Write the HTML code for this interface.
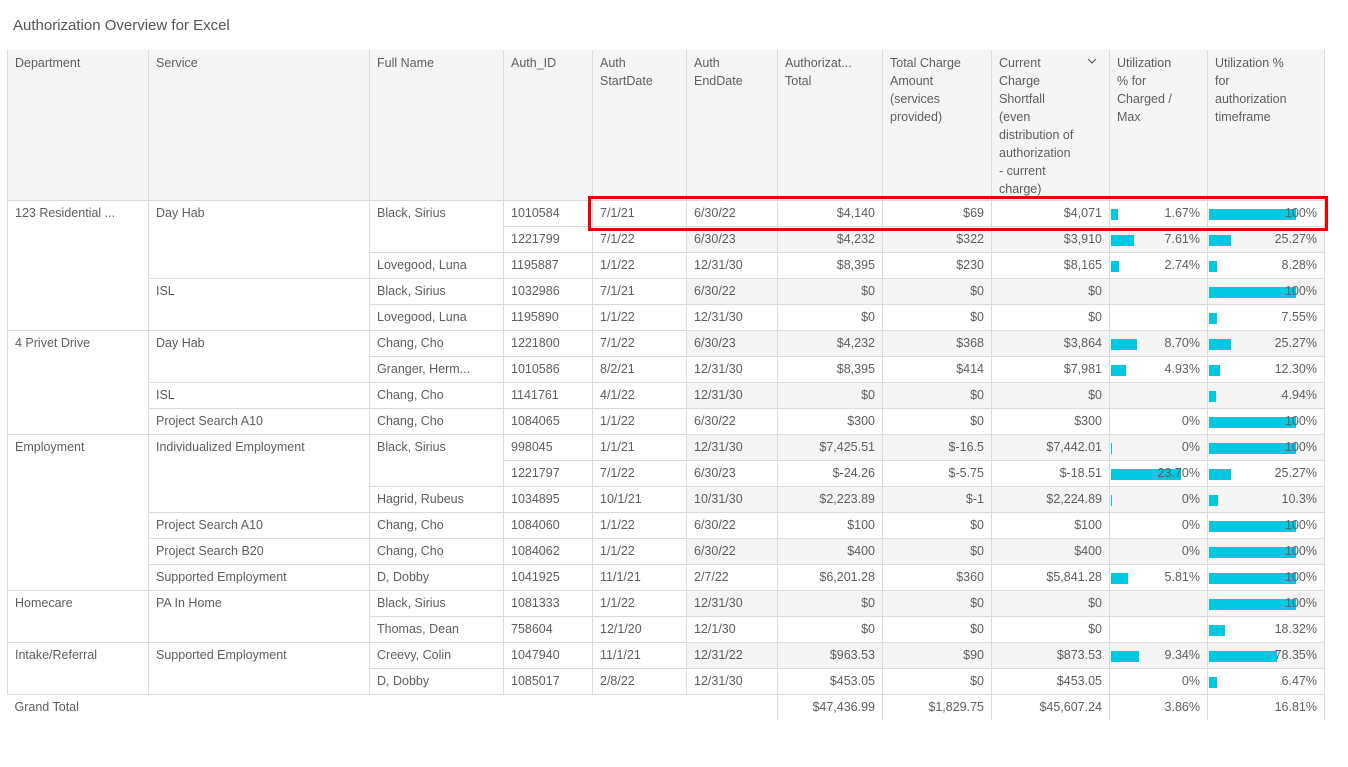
<!DOCTYPE html>
<html><head><meta charset="utf-8"><style>
body{margin:0;width:1348px;height:767px;background:#fff;font-family:"Liberation Sans",sans-serif;color:#605e5c;position:relative;overflow:hidden}
.title{position:absolute;left:13px;top:17px;font-size:15px;color:#555}
table{position:absolute;left:7px;top:50px;border-collapse:collapse;table-layout:fixed;font-size:12.5px}
td,th{border:1px solid #dcdcdc;padding:0 7px;height:25px;white-space:nowrap;overflow:hidden;vertical-align:top;line-height:25px;font-weight:normal}
th{background:#f5f5f5;height:146px;text-align:left;white-space:nowrap;line-height:18px;padding-top:4px;border-top:none;color:#605e5c}
.r{text-align:right}
tr.g td.b{background:#f5f5f5}
.cell{position:relative}
.bar{position:absolute;left:1px;top:8px;height:11px;background:#00c8e1}
.cell span{position:relative}
.gt td{border-left:none;border-right:none;border-bottom:none}
.gt td.v{border-left:1px solid #dcdcdc;border-right:1px solid #dcdcdc}
.box{position:absolute;left:588px;top:196px;width:734px;height:29px;border:3px solid #e00}
</style></head><body>
<div class="title">Authorization Overview for Excel</div>
<table>
<colgroup><col style="width:141px"><col style="width:221px"><col style="width:134px"><col style="width:89px"><col style="width:94px"><col style="width:91px"><col style="width:105px"><col style="width:109px"><col style="width:118px"><col style="width:98px"><col style="width:117px"></colgroup>
<tr><th>Department</th><th>Service</th><th>Full Name</th><th>Auth_ID</th><th>Auth<br>StartDate</th><th>Auth<br>EndDate</th><th>Authorizat...<br>Total</th><th>Total Charge<br>Amount<br>(services<br>provided)</th><th>Current<br>Charge<br>Shortfall<br>(even<br>distribution of<br>authorization<br>- current<br>charge)</th><th>Utilization<br>% for<br>Charged /<br>Max</th><th>Utilization %<br>for<br>authorization<br>timeframe</th></tr>
<tr><td rowspan="5">123 Residential ...</td><td rowspan="3">Day Hab</td><td rowspan="2">Black, Sirius</td><td>1010584</td><td>7/1/21</td><td class="b">6/30/22</td><td class="b r">$4,140</td><td class="b r">$69</td><td class="b r">$4,071</td><td class="b r cell"><div class="bar" style="width:7px"></div><span>1.67%</span></td><td class="b r cell"><div class="bar" style="width:87px"></div><span>100%</span></td></tr>
<tr class="g"><td>1221799</td><td>7/1/22</td><td class="b">6/30/23</td><td class="b r">$4,232</td><td class="b r">$322</td><td class="b r">$3,910</td><td class="b r cell"><div class="bar" style="width:23px"></div><span>7.61%</span></td><td class="b r cell"><div class="bar" style="width:22px"></div><span>25.27%</span></td></tr>
<tr><td>Lovegood, Luna</td><td>1195887</td><td>1/1/22</td><td class="b">12/31/30</td><td class="b r">$8,395</td><td class="b r">$230</td><td class="b r">$8,165</td><td class="b r cell"><div class="bar" style="width:8px"></div><span>2.74%</span></td><td class="b r cell"><div class="bar" style="width:8px"></div><span>8.28%</span></td></tr>
<tr class="g"><td rowspan="2">ISL</td><td>Black, Sirius</td><td>1032986</td><td>7/1/21</td><td class="b">6/30/22</td><td class="b r">$0</td><td class="b r">$0</td><td class="b r">$0</td><td class="b r"></td><td class="b r cell"><div class="bar" style="width:87px"></div><span>100%</span></td></tr>
<tr><td>Lovegood, Luna</td><td>1195890</td><td>1/1/22</td><td class="b">12/31/30</td><td class="b r">$0</td><td class="b r">$0</td><td class="b r">$0</td><td class="b r"></td><td class="b r cell"><div class="bar" style="width:8px"></div><span>7.55%</span></td></tr>
<tr class="g"><td rowspan="4">4 Privet Drive</td><td rowspan="2">Day Hab</td><td>Chang, Cho</td><td>1221800</td><td>7/1/22</td><td class="b">6/30/23</td><td class="b r">$4,232</td><td class="b r">$368</td><td class="b r">$3,864</td><td class="b r cell"><div class="bar" style="width:26px"></div><span>8.70%</span></td><td class="b r cell"><div class="bar" style="width:22px"></div><span>25.27%</span></td></tr>
<tr><td>Granger, Herm...</td><td>1010586</td><td>8/2/21</td><td class="b">12/31/30</td><td class="b r">$8,395</td><td class="b r">$414</td><td class="b r">$7,981</td><td class="b r cell"><div class="bar" style="width:15px"></div><span>4.93%</span></td><td class="b r cell"><div class="bar" style="width:11px"></div><span>12.30%</span></td></tr>
<tr class="g"><td>ISL</td><td>Chang, Cho</td><td>1141761</td><td>4/1/22</td><td class="b">12/31/30</td><td class="b r">$0</td><td class="b r">$0</td><td class="b r">$0</td><td class="b r"></td><td class="b r cell"><div class="bar" style="width:7px"></div><span>4.94%</span></td></tr>
<tr><td>Project Search A10</td><td>Chang, Cho</td><td>1084065</td><td>1/1/22</td><td class="b">6/30/22</td><td class="b r">$300</td><td class="b r">$0</td><td class="b r">$300</td><td class="b r">0%</td><td class="b r cell"><div class="bar" style="width:87px"></div><span>100%</span></td></tr>
<tr class="g"><td rowspan="6">Employment</td><td rowspan="3">Individualized Employment</td><td rowspan="2">Black, Sirius</td><td>998045</td><td>1/1/21</td><td class="b">12/31/30</td><td class="b r">$7,425.51</td><td class="b r">$-16.5</td><td class="b r">$7,442.01</td><td class="b r cell"><div class="bar" style="width:1px"></div><span>0%</span></td><td class="b r cell"><div class="bar" style="width:87px"></div><span>100%</span></td></tr>
<tr><td>1221797</td><td>7/1/22</td><td class="b">6/30/23</td><td class="b r">$-24.26</td><td class="b r">$-5.75</td><td class="b r">$-18.51</td><td class="b r cell"><div class="bar" style="width:70px"></div><span>23.70%</span></td><td class="b r cell"><div class="bar" style="width:22px"></div><span>25.27%</span></td></tr>
<tr class="g"><td>Hagrid, Rubeus</td><td>1034895</td><td>10/1/21</td><td class="b">10/31/30</td><td class="b r">$2,223.89</td><td class="b r">$-1</td><td class="b r">$2,224.89</td><td class="b r cell"><div class="bar" style="width:1px"></div><span>0%</span></td><td class="b r cell"><div class="bar" style="width:9px"></div><span>10.3%</span></td></tr>
<tr><td>Project Search A10</td><td>Chang, Cho</td><td>1084060</td><td>1/1/22</td><td class="b">6/30/22</td><td class="b r">$100</td><td class="b r">$0</td><td class="b r">$100</td><td class="b r">0%</td><td class="b r cell"><div class="bar" style="width:87px"></div><span>100%</span></td></tr>
<tr class="g"><td>Project Search B20</td><td>Chang, Cho</td><td>1084062</td><td>1/1/22</td><td class="b">6/30/22</td><td class="b r">$400</td><td class="b r">$0</td><td class="b r">$400</td><td class="b r">0%</td><td class="b r cell"><div class="bar" style="width:87px"></div><span>100%</span></td></tr>
<tr><td>Supported Employment</td><td>D, Dobby</td><td>1041925</td><td>11/1/21</td><td class="b">2/7/22</td><td class="b r">$6,201.28</td><td class="b r">$360</td><td class="b r">$5,841.28</td><td class="b r cell"><div class="bar" style="width:17px"></div><span>5.81%</span></td><td class="b r cell"><div class="bar" style="width:87px"></div><span>100%</span></td></tr>
<tr class="g"><td rowspan="2">Homecare</td><td rowspan="2">PA In Home</td><td>Black, Sirius</td><td>1081333</td><td>1/1/22</td><td class="b">12/31/30</td><td class="b r">$0</td><td class="b r">$0</td><td class="b r">$0</td><td class="b r"></td><td class="b r cell"><div class="bar" style="width:87px"></div><span>100%</span></td></tr>
<tr><td>Thomas, Dean</td><td>758604</td><td>12/1/20</td><td class="b">12/1/30</td><td class="b r">$0</td><td class="b r">$0</td><td class="b r">$0</td><td class="b r"></td><td class="b r cell"><div class="bar" style="width:16px"></div><span>18.32%</span></td></tr>
<tr class="g"><td rowspan="2">Intake/Referral</td><td rowspan="2">Supported Employment</td><td>Creevy, Colin</td><td>1047940</td><td>11/1/21</td><td class="b">12/31/22</td><td class="b r">$963.53</td><td class="b r">$90</td><td class="b r">$873.53</td><td class="b r cell"><div class="bar" style="width:28px"></div><span>9.34%</span></td><td class="b r cell"><div class="bar" style="width:68px"></div><span>78.35%</span></td></tr>
<tr><td>D, Dobby</td><td>1085017</td><td>2/8/22</td><td class="b">12/31/30</td><td class="b r">$453.05</td><td class="b r">$0</td><td class="b r">$453.05</td><td class="b r">0%</td><td class="b r cell"><div class="bar" style="width:8px"></div><span>6.47%</span></td></tr>
<tr class="gt"><td>Grand Total</td><td></td><td></td><td></td><td></td><td></td><td class="v r">$47,436.99</td><td class="v r">$1,829.75</td><td class="v r">$45,607.24</td><td class="v r">3.86%</td><td class="v r">16.81%</td></tr>
</table>
<svg style="position:absolute;left:1087px;top:57px" width="10" height="8"><path d="M1 2 L5 6 L9 2" stroke="#605e5c" fill="none" stroke-width="1.2"/></svg>
<div class="box"></div>
</body></html>
